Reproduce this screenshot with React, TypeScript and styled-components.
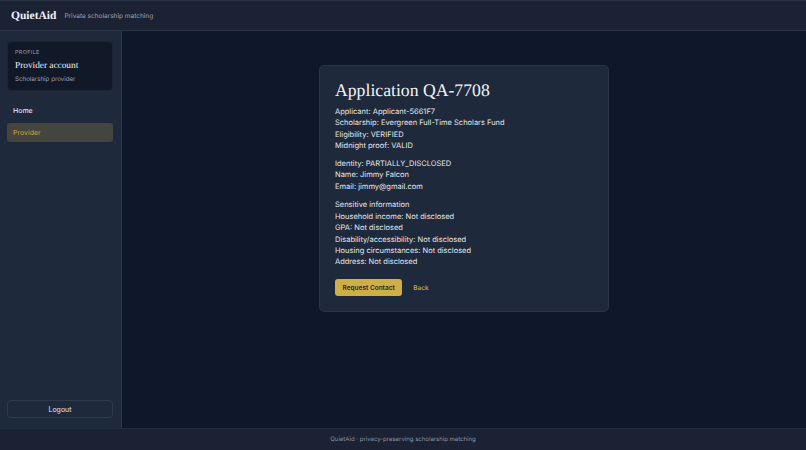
import React from 'react';
import styled, { createGlobalStyle } from 'styled-components';

const GlobalStyle = createGlobalStyle`
  * {
    box-sizing: border-box;
  }

  html,
  body {
    margin: 0;
    height: 100%;
    background: #0f172a;
  }

  body {
    font-family: Inter, "Liberation Sans", sans-serif;
    color: #e5e7eb;
    text-rendering: geometricPrecision;
  }
`;

const serif = `"Liberation Serif", "DejaVu Serif", serif`;

const Shell = styled.div`
  width: 806px;
  height: 450px;
  display: flex;
  flex-direction: column;
  overflow: hidden;
`;

const Header = styled.header`
  height: 31px;
  flex: none;
  display: flex;
  align-items: center;
  gap: 8px;
  padding: 0 11px;
  background: #1a2234;
  border-top: 1px solid #2a3346;
  border-bottom: 1px solid #2b3547;
`;

const Brand = styled.div`
  font-family: ${serif};
  font-size: 11.5px;
  font-weight: 700;
  color: #f3f4f6;
`;

const Tagline = styled.div`
  font-size: 6.5px;
  color: #9ca3af;
`;

const Body = styled.div`
  flex: 1;
  min-height: 0;
  display: flex;
`;

const Sidebar = styled.aside`
  width: 122px;
  flex: none;
  display: flex;
  flex-direction: column;
  padding: 10px 8px 10px 7px;
  background: #1e293b;
  border-right: 1px solid #2b3648;
`;

const ProfileCard = styled.div`
  height: 50px;
  padding: 7px;
  border-radius: 4px;
  background: #111827;
  border: 1px solid #1c2537;
`;

const ProfileLabel = styled.div`
  font-size: 5.4px;
  line-height: 8px;
  letter-spacing: 0.4px;
  color: #9ca3af;
`;

const ProfileName = styled.div`
  margin-top: 3px;
  font-family: ${serif};
  font-size: 9.3px;
  line-height: 12px;
  color: #f3f4f6;
`;

const ProfileRole = styled.div`
  margin-top: 3px;
  font-size: 6.2px;
  line-height: 9px;
  color: #9ca3af;
`;

const Nav = styled.nav`
  margin-top: 10px;
  display: flex;
  flex-direction: column;
  gap: 3px;
`;

const NavItem = styled.a<{ $active?: boolean }>`
  height: 19px;
  display: flex;
  align-items: center;
  padding: 0 6px;
  border-radius: 3px;
  font-size: 7px;
  color: ${(p) => (p.$active ? '#c9a63f' : '#f3f4f6')};
  background: ${(p) => (p.$active ? '#45453f' : 'transparent')};
`;

const LogoutButton = styled.button`
  margin-top: auto;
  height: 18px;
  border-radius: 4px;
  background: transparent;
  border: 1px solid #2f3a4d;
  color: #e5e7eb;
  font-family: inherit;
  font-size: 7px;
`;

const Main = styled.main`
  flex: 1;
  min-width: 0;
  display: flex;
  justify-content: center;
  align-items: flex-start;
  padding-top: 34px;
  background: #0f172a;
`;

const Card = styled.section`
  width: 290px;
  height: 247px;
  padding: 13px 15px;
  border-radius: 5px;
  background: #1e293b;
  border: 1px solid #2a3446;
`;

const Title = styled.h1`
  margin: 0 0 5px;
  font-family: ${serif};
  font-size: 17.7px;
  line-height: 22px;
  font-weight: 400;
  color: #f3f4f6;
`;

const Block = styled.div`
  margin-bottom: 7px;
`;

const Line = styled.p<{ $heading?: boolean }>`
  margin: 0 0 ${(p) => (p.$heading ? '1px' : '0')};
  font-size: 7.5px;
  line-height: 11.25px;
  color: #e5e7eb;
`;

const Actions = styled.div`
  margin-top: 12px;
  display: flex;
  align-items: center;
  gap: 11px;
`;

const PrimaryButton = styled.button`
  height: 17px;
  padding: 0 7.5px;
  border: none;
  border-radius: 3px;
  background: #cfae45;
  color: #1f2937;
  font-family: inherit;
  font-size: 6.5px;
  font-weight: 600;
`;

const BackLink = styled.a`
  font-size: 6.5px;
  font-weight: 600;
  color: #b8a04a;
`;

const Footer = styled.footer`
  height: 22px;
  flex: none;
  display: flex;
  align-items: center;
  justify-content: center;
  background: #1a2234;
  border-top: 1px solid #232c3e;
  font-size: 6px;
  color: #8b93a1;
`;

const overview = [
  'Applicant: Applicant-5661F7',
  'Scholarship: Evergreen Full-Time Scholars Fund',
  'Eligibility: VERIFIED',
  'Midnight proof: VALID',
];

const identity = [
  'Identity: PARTIALLY_DISCLOSED',
  'Name: Jimmy Falcon',
  'Email: jimmy@gmail.com',
];

const sensitive = [
  'Household income: Not disclosed',
  'GPA: Not disclosed',
  'Disability/accessibility: Not disclosed',
  'Housing circumstances: Not disclosed',
  'Address: Not disclosed',
];

const App = () => {
  return (
    <Shell>
      <GlobalStyle />
      <Header>
        <Brand>QuietAid</Brand>
        <Tagline>Private scholarship matching</Tagline>
      </Header>
      <Body>
        <Sidebar>
          <ProfileCard>
            <ProfileLabel>PROFILE</ProfileLabel>
            <ProfileName>Provider account</ProfileName>
            <ProfileRole>Scholarship provider</ProfileRole>
          </ProfileCard>
          <Nav>
            <NavItem>Home</NavItem>
            <NavItem $active>Provider</NavItem>
          </Nav>
          <LogoutButton>Logout</LogoutButton>
        </Sidebar>
        <Main>
          <Card>
            <Title>Application QA-7708</Title>
            <Block>
              {overview.map((line) => (
                <Line key={line}>{line}</Line>
              ))}
            </Block>
            <Block>
              {identity.map((line) => (
                <Line key={line}>{line}</Line>
              ))}
            </Block>
            <Block>
              <Line $heading>Sensitive information</Line>
              {sensitive.map((line) => (
                <Line key={line}>{line}</Line>
              ))}
            </Block>
            <Actions>
              <PrimaryButton>Request Contact</PrimaryButton>
              <BackLink>Back</BackLink>
            </Actions>
          </Card>
        </Main>
      </Body>
      <Footer>QuietAid · privacy-preserving scholarship matching</Footer>
    </Shell>
  );
};

export default App;
